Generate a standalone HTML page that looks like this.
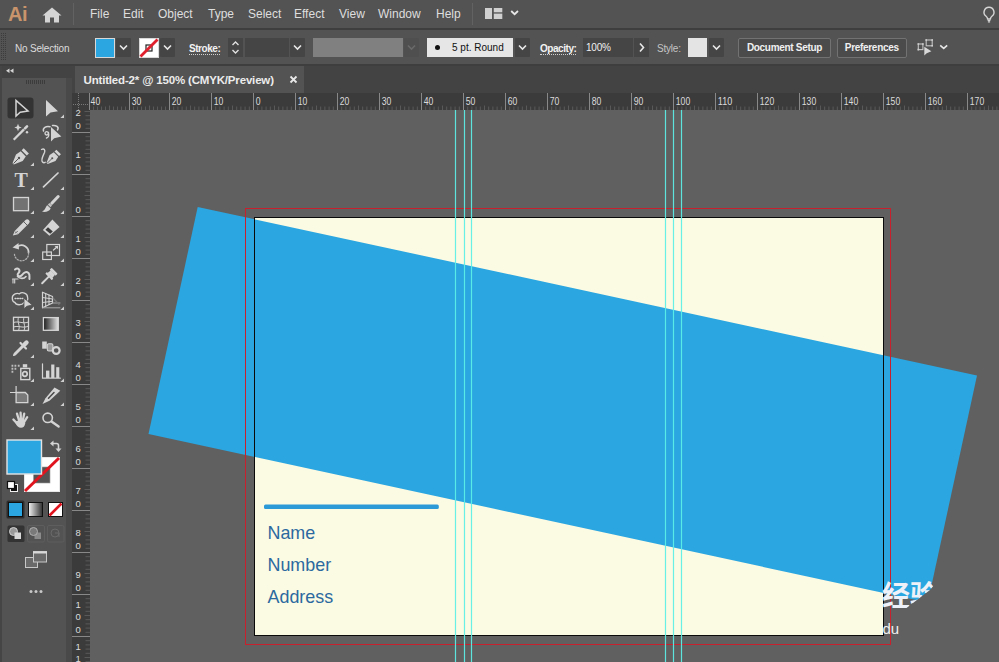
<!DOCTYPE html>
<html><head><meta charset="utf-8"><title>Untitled-2* @ 150% (CMYK/Preview)</title>
<style>
html,body{margin:0;padding:0;}
body{width:999px;height:662px;overflow:hidden;background:#606060;position:relative;font-family:"Liberation Sans",sans-serif;}
.abs{position:absolute;}
.menubar{left:0;top:0;width:999px;height:29px;background:#535353;}
.mi{position:absolute;top:6px;font-size:12px;color:#dedede;line-height:16px;white-space:nowrap;}
.ctrl{left:0;top:30px;width:999px;height:35px;background:#535353;}
.sep1{left:0;top:28px;width:999px;height:2px;background:#3e3e3e;}
.sep2{left:0;top:64px;width:999px;height:2px;background:#3e3e3e;}
.lbl{position:absolute;font-size:10px;color:#e8e8e8;white-space:nowrap;line-height:12px;letter-spacing:-0.2px;}
.dd{position:absolute;top:38px;height:19px;width:15px;background:#454545;border-radius:1px;}
.btn{position:absolute;top:38px;height:18px;border:1px solid #727272;border-radius:2px;background:#4b4b4b;color:#f0f0f0;font-size:10px;font-weight:bold;line-height:18px;text-align:center;letter-spacing:-0.3px;}
.tabbar{left:72px;top:66px;width:927px;height:27px;background:#434343;}
.tab{left:75px;top:66px;width:229px;height:27px;background:#535353;}
.tabtxt{position:absolute;left:83.5px;top:73.6px;font-size:11.5px;font-weight:bold;color:#ececec;white-space:nowrap;line-height:13px;letter-spacing:-0.17px;}
.tools{left:0;top:78px;width:66px;height:584px;background:#535353;}
.toolhdr{left:0;top:66px;width:72px;height:12px;background:#434343;}
.strip{left:66px;top:78px;width:6px;height:584px;background:#494949;}
</style></head><body>

<svg class="abs" style="left:0;top:0" width="999" height="662" viewBox="0 0 999 662">
<defs><clipPath id="cv"><rect x="90" y="110" width="909" height="552"/></clipPath></defs>
<g clip-path="url(#cv)">
<rect x="254.5" y="217.5" width="629" height="418" fill="#fbfae3"/>
<polygon points="197.7,207.0 977.0,375.5 927.8,602.5 148.5,434.0" fill="#2ba6e0"/>
<rect x="264" y="504.6" width="174.8" height="4.4" rx="1.5" fill="#2d9ad8"/>
<text x="267.5" y="538.8" font-family="Liberation Sans, sans-serif" font-size="17.9" fill="#2b699f">Name</text>
<text x="267.5" y="570.7" font-family="Liberation Sans, sans-serif" font-size="17.9" fill="#2b699f">Number</text>
<text x="267.5" y="602.9" font-family="Liberation Sans, sans-serif" font-size="17.9" fill="#2b699f">Address</text>
<rect x="254.5" y="217.5" width="629" height="418" fill="none" stroke="#0a0a0a" stroke-width="1"/>
<rect x="245.5" y="208.5" width="645" height="436" fill="none" stroke="#c8202c" stroke-width="1"/>
<text x="882" y="606" font-family="Liberation Sans, Noto Sans CJK SC, sans-serif" font-size="28" font-weight="bold" fill="#eef2f8">经验</text>
<text x="882.5" y="634" font-family="Liberation Sans, sans-serif" font-size="15" fill="#f0f0f0">du</text>
<polygon points="939,560 999,560 999,662 900,662 900,640 900,613 913,603 930,590 936.5,582" fill="#606060"/>
<line x1="455.5" y1="110" x2="455.5" y2="662" stroke="#5cf0e8" stroke-width="1.2" opacity="0.92"/>
<line x1="464.5" y1="110" x2="464.5" y2="662" stroke="#5cf0e8" stroke-width="1.2" opacity="0.92"/>
<line x1="471.5" y1="110" x2="471.5" y2="662" stroke="#5cf0e8" stroke-width="1.2" opacity="0.92"/>
<line x1="665.5" y1="110" x2="665.5" y2="662" stroke="#5cf0e8" stroke-width="1.2" opacity="0.92"/>
<line x1="673.5" y1="110" x2="673.5" y2="662" stroke="#5cf0e8" stroke-width="1.2" opacity="0.92"/>
<line x1="681.5" y1="110" x2="681.5" y2="662" stroke="#5cf0e8" stroke-width="1.2" opacity="0.92"/>
</g>
<rect x="72" y="93" width="927" height="17" fill="#3b3b3b"/>
<rect x="72" y="92" width="18" height="570" fill="#3b3b3b"/>
<path d="M89.5 93V110M129.5 93V110M169.5 93V110M211.5 93V110M253.5 93V110M295.5 93V110M337.5 93V110M379.5 93V110M421.5 93V110M463.5 93V110M505.5 93V110M547.5 93V110M589.5 93V110M631.5 93V110M673.5 93V110M715.5 93V110M757.5 93V110M799.5 93V110M841.5 93V110M883.5 93V110M925.5 93V110M967.5 93V110" stroke="#888888" stroke-width="1" fill="none"/>
<path d="M93.5 106.5V110M97.5 106.5V110M101.5 106.5V110M105.5 106.5V110M109.5 105.5V110M113.5 106.5V110M117.5 106.5V110M121.5 106.5V110M125.5 106.5V110M133.5 106.5V110M137.5 106.5V110M141.5 106.5V110M145.5 106.5V110M149.5 105.5V110M153.5 106.5V110M157.5 106.5V110M161.5 106.5V110M165.5 106.5V110M173.7 106.5V110M177.9 106.5V110M182.1 106.5V110M186.3 106.5V110M190.5 105.5V110M194.7 106.5V110M198.9 106.5V110M203.1 106.5V110M207.3 106.5V110M215.7 106.5V110M219.9 106.5V110M224.1 106.5V110M228.3 106.5V110M232.5 105.5V110M236.7 106.5V110M240.9 106.5V110M245.1 106.5V110M249.3 106.5V110M257.7 106.5V110M261.9 106.5V110M266.1 106.5V110M270.3 106.5V110M274.5 105.5V110M278.7 106.5V110M282.9 106.5V110M287.1 106.5V110M291.3 106.5V110M299.7 106.5V110M303.9 106.5V110M308.1 106.5V110M312.3 106.5V110M316.5 105.5V110M320.7 106.5V110M324.9 106.5V110M329.1 106.5V110M333.3 106.5V110M341.7 106.5V110M345.9 106.5V110M350.1 106.5V110M354.3 106.5V110M358.5 105.5V110M362.7 106.5V110M366.9 106.5V110M371.1 106.5V110M375.3 106.5V110M383.7 106.5V110M387.9 106.5V110M392.1 106.5V110M396.3 106.5V110M400.5 105.5V110M404.7 106.5V110M408.9 106.5V110M413.1 106.5V110M417.3 106.5V110M425.7 106.5V110M429.9 106.5V110M434.1 106.5V110M438.3 106.5V110M442.5 105.5V110M446.7 106.5V110M450.9 106.5V110M455.1 106.5V110M459.3 106.5V110M467.7 106.5V110M471.9 106.5V110M476.1 106.5V110M480.3 106.5V110M484.5 105.5V110M488.7 106.5V110M492.9 106.5V110M497.1 106.5V110M501.3 106.5V110M509.7 106.5V110M513.9 106.5V110M518.1 106.5V110M522.3 106.5V110M526.5 105.5V110M530.7 106.5V110M534.9 106.5V110M539.1 106.5V110M543.3 106.5V110M551.7 106.5V110M555.9 106.5V110M560.1 106.5V110M564.3 106.5V110M568.5 105.5V110M572.7 106.5V110M576.9 106.5V110M581.1 106.5V110M585.3 106.5V110M593.7 106.5V110M597.9 106.5V110M602.1 106.5V110M606.3 106.5V110M610.5 105.5V110M614.7 106.5V110M618.9 106.5V110M623.1 106.5V110M627.3 106.5V110M635.7 106.5V110M639.9 106.5V110M644.1 106.5V110M648.3 106.5V110M652.5 105.5V110M656.7 106.5V110M660.9 106.5V110M665.1 106.5V110M669.3 106.5V110M677.7 106.5V110M681.9 106.5V110M686.1 106.5V110M690.3 106.5V110M694.5 105.5V110M698.7 106.5V110M702.9 106.5V110M707.1 106.5V110M711.3 106.5V110M719.7 106.5V110M723.9 106.5V110M728.1 106.5V110M732.3 106.5V110M736.5 105.5V110M740.7 106.5V110M744.9 106.5V110M749.1 106.5V110M753.3 106.5V110M761.7 106.5V110M765.9 106.5V110M770.1 106.5V110M774.3 106.5V110M778.5 105.5V110M782.7 106.5V110M786.9 106.5V110M791.1 106.5V110M795.3 106.5V110M803.7 106.5V110M807.9 106.5V110M812.1 106.5V110M816.3 106.5V110M820.5 105.5V110M824.7 106.5V110M828.9 106.5V110M833.1 106.5V110M837.3 106.5V110M845.7 106.5V110M849.9 106.5V110M854.1 106.5V110M858.3 106.5V110M862.5 105.5V110M866.7 106.5V110M870.9 106.5V110M875.1 106.5V110M879.3 106.5V110M887.7 106.5V110M891.9 106.5V110M896.1 106.5V110M900.3 106.5V110M904.5 105.5V110M908.7 106.5V110M912.9 106.5V110M917.1 106.5V110M921.3 106.5V110M929.7 106.5V110M933.9 106.5V110M938.1 106.5V110M942.3 106.5V110M946.5 105.5V110M950.7 106.5V110M954.9 106.5V110M959.1 106.5V110M963.3 106.5V110M971.7 106.5V110M975.9 106.5V110M980.1 106.5V110M984.3 106.5V110M988.5 105.5V110M992.7 106.5V110M996.9 106.5V110" stroke="#8c8c8c" stroke-width="1" fill="none" opacity="0.38"/>
<text x="90.6" y="104.5" font-family="Liberation Sans, sans-serif" font-size="10" fill="#dcdcdc" textLength="9.6" lengthAdjust="spacingAndGlyphs">40</text>
<text x="131.8" y="104.5" font-family="Liberation Sans, sans-serif" font-size="10" fill="#dcdcdc" textLength="9.6" lengthAdjust="spacingAndGlyphs">30</text>
<text x="171.8" y="104.5" font-family="Liberation Sans, sans-serif" font-size="10" fill="#dcdcdc" textLength="9.6" lengthAdjust="spacingAndGlyphs">20</text>
<text x="213.8" y="104.5" font-family="Liberation Sans, sans-serif" font-size="10" fill="#dcdcdc" textLength="9.6" lengthAdjust="spacingAndGlyphs">10</text>
<text x="255.8" y="104.5" font-family="Liberation Sans, sans-serif" font-size="10" fill="#dcdcdc" textLength="4.8" lengthAdjust="spacingAndGlyphs">0</text>
<text x="297.8" y="104.5" font-family="Liberation Sans, sans-serif" font-size="10" fill="#dcdcdc" textLength="9.6" lengthAdjust="spacingAndGlyphs">10</text>
<text x="339.8" y="104.5" font-family="Liberation Sans, sans-serif" font-size="10" fill="#dcdcdc" textLength="9.6" lengthAdjust="spacingAndGlyphs">20</text>
<text x="381.8" y="104.5" font-family="Liberation Sans, sans-serif" font-size="10" fill="#dcdcdc" textLength="9.6" lengthAdjust="spacingAndGlyphs">30</text>
<text x="423.8" y="104.5" font-family="Liberation Sans, sans-serif" font-size="10" fill="#dcdcdc" textLength="9.6" lengthAdjust="spacingAndGlyphs">40</text>
<text x="465.8" y="104.5" font-family="Liberation Sans, sans-serif" font-size="10" fill="#dcdcdc" textLength="9.6" lengthAdjust="spacingAndGlyphs">50</text>
<text x="507.8" y="104.5" font-family="Liberation Sans, sans-serif" font-size="10" fill="#dcdcdc" textLength="9.6" lengthAdjust="spacingAndGlyphs">60</text>
<text x="549.8" y="104.5" font-family="Liberation Sans, sans-serif" font-size="10" fill="#dcdcdc" textLength="9.6" lengthAdjust="spacingAndGlyphs">70</text>
<text x="591.8" y="104.5" font-family="Liberation Sans, sans-serif" font-size="10" fill="#dcdcdc" textLength="9.6" lengthAdjust="spacingAndGlyphs">80</text>
<text x="633.8" y="104.5" font-family="Liberation Sans, sans-serif" font-size="10" fill="#dcdcdc" textLength="9.6" lengthAdjust="spacingAndGlyphs">90</text>
<text x="675.8" y="104.5" font-family="Liberation Sans, sans-serif" font-size="10" fill="#dcdcdc" textLength="14.4" lengthAdjust="spacingAndGlyphs">100</text>
<text x="717.8" y="104.5" font-family="Liberation Sans, sans-serif" font-size="10" fill="#dcdcdc" textLength="14.4" lengthAdjust="spacingAndGlyphs">110</text>
<text x="759.8" y="104.5" font-family="Liberation Sans, sans-serif" font-size="10" fill="#dcdcdc" textLength="14.4" lengthAdjust="spacingAndGlyphs">120</text>
<text x="801.8" y="104.5" font-family="Liberation Sans, sans-serif" font-size="10" fill="#dcdcdc" textLength="14.4" lengthAdjust="spacingAndGlyphs">130</text>
<text x="843.8" y="104.5" font-family="Liberation Sans, sans-serif" font-size="10" fill="#dcdcdc" textLength="14.4" lengthAdjust="spacingAndGlyphs">140</text>
<text x="885.8" y="104.5" font-family="Liberation Sans, sans-serif" font-size="10" fill="#dcdcdc" textLength="14.4" lengthAdjust="spacingAndGlyphs">150</text>
<text x="927.8" y="104.5" font-family="Liberation Sans, sans-serif" font-size="10" fill="#dcdcdc" textLength="14.4" lengthAdjust="spacingAndGlyphs">160</text>
<text x="969.8" y="104.5" font-family="Liberation Sans, sans-serif" font-size="10" fill="#dcdcdc" textLength="14.4" lengthAdjust="spacingAndGlyphs">170</text>
<g clip-path="url(#lr)"><defs><clipPath id="lr"><rect x="72" y="110" width="18" height="552"/></clipPath></defs>
<path d="M72 132.5H90M72 174.5H90M72 216.5H90M72 258.5H90M72 300.5H90M72 342.5H90M72 384.5H90M72 426.5H90M72 468.5H90M72 510.5H90M72 552.5H90M72 594.5H90M72 636.5H90" stroke="#888888" stroke-width="1" fill="none"/>
<path d="M84.5 111.5H90M85.5 115.7H90M85.5 119.9H90M85.5 124.1H90M85.5 128.3H90M85.5 136.7H90M85.5 140.9H90M85.5 145.1H90M85.5 149.3H90M84.5 153.5H90M85.5 157.7H90M85.5 161.9H90M85.5 166.1H90M85.5 170.3H90M85.5 178.7H90M85.5 182.9H90M85.5 187.1H90M85.5 191.3H90M84.5 195.5H90M85.5 199.7H90M85.5 203.9H90M85.5 208.1H90M85.5 212.3H90M85.5 220.7H90M85.5 224.9H90M85.5 229.1H90M85.5 233.3H90M84.5 237.5H90M85.5 241.7H90M85.5 245.9H90M85.5 250.1H90M85.5 254.3H90M85.5 262.7H90M85.5 266.9H90M85.5 271.1H90M85.5 275.3H90M84.5 279.5H90M85.5 283.7H90M85.5 287.9H90M85.5 292.1H90M85.5 296.3H90M85.5 304.7H90M85.5 308.9H90M85.5 313.1H90M85.5 317.3H90M84.5 321.5H90M85.5 325.7H90M85.5 329.9H90M85.5 334.1H90M85.5 338.3H90M85.5 346.7H90M85.5 350.9H90M85.5 355.1H90M85.5 359.3H90M84.5 363.5H90M85.5 367.7H90M85.5 371.9H90M85.5 376.1H90M85.5 380.3H90M85.5 388.7H90M85.5 392.9H90M85.5 397.1H90M85.5 401.3H90M84.5 405.5H90M85.5 409.7H90M85.5 413.9H90M85.5 418.1H90M85.5 422.3H90M85.5 430.7H90M85.5 434.9H90M85.5 439.1H90M85.5 443.3H90M84.5 447.5H90M85.5 451.7H90M85.5 455.9H90M85.5 460.1H90M85.5 464.3H90M85.5 472.7H90M85.5 476.9H90M85.5 481.1H90M85.5 485.3H90M84.5 489.5H90M85.5 493.7H90M85.5 497.9H90M85.5 502.1H90M85.5 506.3H90M85.5 514.7H90M85.5 518.9H90M85.5 523.1H90M85.5 527.3H90M84.5 531.5H90M85.5 535.7H90M85.5 539.9H90M85.5 544.1H90M85.5 548.3H90M85.5 556.7H90M85.5 560.9H90M85.5 565.1H90M85.5 569.3H90M84.5 573.5H90M85.5 577.7H90M85.5 581.9H90M85.5 586.1H90M85.5 590.3H90M85.5 598.7H90M85.5 602.9H90M85.5 607.1H90M85.5 611.3H90M84.5 615.5H90M85.5 619.7H90M85.5 623.9H90M85.5 628.1H90M85.5 632.3H90M85.5 640.7H90M85.5 644.9H90M85.5 649.1H90M85.5 653.3H90M84.5 657.5H90M85.5 661.7H90" stroke="#8c8c8c" stroke-width="1" fill="none" opacity="0.38"/>
<text x="75.5" y="116.4" font-family="Liberation Sans, sans-serif" font-size="9.5" fill="#dcdcdc">2</text>
<text x="75.5" y="129.0" font-family="Liberation Sans, sans-serif" font-size="9.5" fill="#dcdcdc">0</text>
<text x="75.5" y="158.4" font-family="Liberation Sans, sans-serif" font-size="9.5" fill="#dcdcdc">1</text>
<text x="75.5" y="171.0" font-family="Liberation Sans, sans-serif" font-size="9.5" fill="#dcdcdc">0</text>
<text x="75.5" y="213.0" font-family="Liberation Sans, sans-serif" font-size="9.5" fill="#dcdcdc">0</text>
<text x="75.5" y="242.4" font-family="Liberation Sans, sans-serif" font-size="9.5" fill="#dcdcdc">1</text>
<text x="75.5" y="255.0" font-family="Liberation Sans, sans-serif" font-size="9.5" fill="#dcdcdc">0</text>
<text x="75.5" y="284.4" font-family="Liberation Sans, sans-serif" font-size="9.5" fill="#dcdcdc">2</text>
<text x="75.5" y="297.0" font-family="Liberation Sans, sans-serif" font-size="9.5" fill="#dcdcdc">0</text>
<text x="75.5" y="326.4" font-family="Liberation Sans, sans-serif" font-size="9.5" fill="#dcdcdc">3</text>
<text x="75.5" y="339.0" font-family="Liberation Sans, sans-serif" font-size="9.5" fill="#dcdcdc">0</text>
<text x="75.5" y="368.4" font-family="Liberation Sans, sans-serif" font-size="9.5" fill="#dcdcdc">4</text>
<text x="75.5" y="381.0" font-family="Liberation Sans, sans-serif" font-size="9.5" fill="#dcdcdc">0</text>
<text x="75.5" y="410.4" font-family="Liberation Sans, sans-serif" font-size="9.5" fill="#dcdcdc">5</text>
<text x="75.5" y="423.0" font-family="Liberation Sans, sans-serif" font-size="9.5" fill="#dcdcdc">0</text>
<text x="75.5" y="452.4" font-family="Liberation Sans, sans-serif" font-size="9.5" fill="#dcdcdc">6</text>
<text x="75.5" y="465.0" font-family="Liberation Sans, sans-serif" font-size="9.5" fill="#dcdcdc">0</text>
<text x="75.5" y="494.4" font-family="Liberation Sans, sans-serif" font-size="9.5" fill="#dcdcdc">7</text>
<text x="75.5" y="507.0" font-family="Liberation Sans, sans-serif" font-size="9.5" fill="#dcdcdc">0</text>
<text x="75.5" y="536.4" font-family="Liberation Sans, sans-serif" font-size="9.5" fill="#dcdcdc">8</text>
<text x="75.5" y="549.0" font-family="Liberation Sans, sans-serif" font-size="9.5" fill="#dcdcdc">0</text>
<text x="75.5" y="578.4" font-family="Liberation Sans, sans-serif" font-size="9.5" fill="#dcdcdc">9</text>
<text x="75.5" y="591.0" font-family="Liberation Sans, sans-serif" font-size="9.5" fill="#dcdcdc">0</text>
<text x="75.5" y="607.8" font-family="Liberation Sans, sans-serif" font-size="9.5" fill="#dcdcdc">1</text>
<text x="75.5" y="620.4" font-family="Liberation Sans, sans-serif" font-size="9.5" fill="#dcdcdc">0</text>
<text x="75.5" y="633.0" font-family="Liberation Sans, sans-serif" font-size="9.5" fill="#dcdcdc">0</text>
<text x="75.5" y="649.8" font-family="Liberation Sans, sans-serif" font-size="9.5" fill="#dcdcdc">1</text>
<text x="75.5" y="662.4" font-family="Liberation Sans, sans-serif" font-size="9.5" fill="#dcdcdc">1</text>
<text x="75.5" y="675.0" font-family="Liberation Sans, sans-serif" font-size="9.5" fill="#dcdcdc">0</text>
<text x="75.5" y="691.8" font-family="Liberation Sans, sans-serif" font-size="9.5" fill="#dcdcdc">1</text>
<text x="75.5" y="704.4" font-family="Liberation Sans, sans-serif" font-size="9.5" fill="#dcdcdc">2</text>
<text x="75.5" y="717.0" font-family="Liberation Sans, sans-serif" font-size="9.5" fill="#dcdcdc">0</text>
</g>
<rect x="72" y="92" width="17" height="18" fill="#3b3b3b"/>
<path d="M78.5 93V110M73 104.5H90" stroke="#8a8a8a" stroke-width="1" stroke-dasharray="1 1" fill="none" opacity="0.8"/>
</svg>
<div class="abs menubar"></div><div class="abs sep1"></div><div class="abs ctrl"></div><div class="abs sep2"></div>
<div class="abs" style="left:8px;top:1px;font-size:20px;font-weight:bold;color:#c9946b;letter-spacing:-0.5px;line-height:26px;">Ai</div>
<svg class="abs" style="left:42px;top:7px" width="20" height="16" viewBox="0 0 20 16"><path d="M10 0.5L0.5 8.5H3V15.5H8V10.5H12V15.5H17V8.5H19.5Z" fill="#d4d4d4"/></svg>
<div class="abs" style="left:73px;top:3px;width:1px;height:22px;background:#626262"></div>
<div class="mi" id="m_File" style="left:90px;width:18px">File</div>
<div class="mi" id="m_Edit" style="left:123px;width:20px">Edit</div>
<div class="mi" id="m_Object" style="left:158px;width:35px">Object</div>
<div class="mi" id="m_Type" style="left:208px;width:25px">Type</div>
<div class="mi" id="m_Select" style="left:248px;width:31px">Select</div>
<div class="mi" id="m_Effect" style="left:294px;width:30px">Effect</div>
<div class="mi" id="m_View" style="left:339px;width:24px">View</div>
<div class="mi" id="m_Window" style="left:378px;width:43px">Window</div>
<div class="mi" id="m_Help" style="left:436px;width:25px">Help</div>
<div class="abs" style="left:472px;top:3px;width:1px;height:22px;background:#626262"></div>
<svg class="abs" style="left:485px;top:8px" width="36" height="12" viewBox="0 0 36 12"><rect x="0" y="0" width="7" height="11" fill="#d0d0d0"/><rect x="8.800" y="0" width="8.500" height="4.300" fill="#d0d0d0"/><rect x="8.800" y="5.600" width="8.500" height="5.400" fill="#d0d0d0"/><path d="M26.200 3L29.600 6.200L33 3" stroke="#e8e8e8" stroke-width="1.800" fill="none"/></svg>
<svg class="abs" style="left:980px;top:5px" width="19" height="20" viewBox="0 0 19 20"><path d="M9 2.300a4.900 4.900 0 0 0-2.900 8.900c.9.700 1.400 1.600 1.500 2.800h2.800c.1-1.200.6-2.100 1.500-2.800A4.900 4.900 0 0 0 9 2.300Z" fill="none" stroke="#d6d6d6" stroke-width="1.400"/><path d="M7.600 15.300h2.800M7.900 16.900h2.200" stroke="#d6d6d6" stroke-width="1.300"/></svg>
<div class="abs" style="left:1px;top:33px;width:6px;height:28px;background:repeating-linear-gradient(0deg,#535353 0 1px,rgba(83,83,83,0) 1px 2px),repeating-linear-gradient(90deg,#3c3c3c 0 1px,#535353 1px 2px)"></div>
<div class="lbl" style="left:15px;top:43px;color:#dcdcdc">No Selection</div>
<div class="abs" style="left:95px;top:38px;width:18px;height:18px;background:#2ba6e0;border:1px solid #d8d8d8"></div>
<div class="dd" style="left:116px;background:#454545"><svg width="15" height="19" viewBox="0 0 15 19"><path d="M4 7.500L7.500 11L11 7.500" stroke="#e8e8e8" stroke-width="1.600" fill="none"/></svg></div>
<svg class="abs" style="left:139px;top:38px" width="20" height="20" viewBox="0 0 20 20"><rect x="0.5" y="0.5" width="19" height="19" fill="#ffffff" stroke="#d8d8d8"/><rect x="7" y="7" width="6" height="6" fill="none" stroke="#222" stroke-width="1.200"/><path d="M1.500 18.500L18.500 1.500" stroke="#e0202c" stroke-width="2.800"/></svg>
<div class="dd" style="left:160px;background:#454545"><svg width="15" height="19" viewBox="0 0 15 19"><path d="M4 7.500L7.500 11L11 7.500" stroke="#e8e8e8" stroke-width="1.600" fill="none"/></svg></div>
<div class="lbl" style="left:189px;top:43px;font-weight:bold;color:#f2f2f2;border-bottom:1px dotted #d0d0d0;line-height:11px;letter-spacing:-0.45px;">Stroke:</div>
<div class="abs" style="left:228px;top:38px;width:15px;height:19px;background:#454545"><svg width="15" height="19" viewBox="0 0 15 19"><path d="M4.500 7L7.500 4L10.500 7M4.500 12L7.500 15L10.500 12" stroke="#e0e0e0" stroke-width="1.400" fill="none"/></svg></div>
<div class="abs" style="left:245px;top:38px;width:44px;height:19px;background:#454545"></div>
<div class="dd" style="left:290px;background:#454545"><svg width="15" height="19" viewBox="0 0 15 19"><path d="M4 7.500L7.500 11L11 7.500" stroke="#e8e8e8" stroke-width="1.600" fill="none"/></svg></div>
<div class="abs" style="left:313px;top:38px;width:90px;height:19px;background:#808080"></div>
<div class="dd" style="left:404px;background:#4f4f4f"><svg width="15" height="19" viewBox="0 0 15 19"><path d="M4 7.500L7.500 11L11 7.500" stroke="#6a6a6a" stroke-width="1.600" fill="none"/></svg></div>
<div class="abs" style="left:427px;top:38px;width:86px;height:19px;background:#e6e6e6"><div class="abs" style="left:8px;top:7px;width:5px;height:5px;border-radius:3px;background:#111"></div><div class="lbl" style="left:25px;top:4px;color:#111;letter-spacing:0">5 pt. Round</div></div>
<div class="dd" style="left:515px;background:#454545"><svg width="15" height="19" viewBox="0 0 15 19"><path d="M4 7.500L7.500 11L11 7.500" stroke="#e8e8e8" stroke-width="1.600" fill="none"/></svg></div>
<div class="lbl" style="left:540px;top:43px;font-weight:bold;color:#f2f2f2;border-bottom:1px dotted #d0d0d0;line-height:11px;letter-spacing:-0.45px;">Opacity:</div>
<div class="abs" style="left:583px;top:38px;width:50px;height:19px;background:#454545"><div class="lbl" style="left:3px;top:4px;color:#f0f0f0">100%</div></div>
<div class="abs" style="left:634px;top:38px;width:15px;height:19px;background:#454545"><svg width="15" height="19" viewBox="0 0 15 19"><path d="M6 5.500L9.500 9.500L6 13.500" stroke="#e8e8e8" stroke-width="1.600" fill="none"/></svg></div>
<div class="lbl" style="left:657px;top:43px;color:#c4c4c4;">Style:</div>
<div class="abs" style="left:688px;top:38px;width:19px;height:19px;background:#e4e4e4"></div>
<div class="dd" style="left:709px;background:#454545"><svg width="15" height="19" viewBox="0 0 15 19"><path d="M4 7.500L7.500 11L11 7.500" stroke="#e8e8e8" stroke-width="1.600" fill="none"/></svg></div>
<div class="btn" style="left:738px;width:91px">Document Setup</div>
<div class="btn" style="left:836.5px;width:68.5px">Preferences</div>
<svg class="abs" style="left:917px;top:38px" width="34" height="19" viewBox="0 0 34 19"><rect x="1.300" y="6" width="4.600" height="5.600" fill="none" stroke="#c4c4c4" stroke-width="1.100"/><rect x="9.200" y="2" width="6" height="5.800" fill="none" stroke="#c4c4c4" stroke-width="1.100"/><path d="M0.500 5.200h1.600v1.600h-1.600zM5.100 5.200h1.600v1.600h-1.600zM0.500 10.800h1.600v1.600h-1.600zM8.400 1.200h1.600v1.600h-1.600zM14.400 1.200h1.600v1.600h-1.600zM14.400 7h1.600v1.600h-1.600z" fill="#d0d0d0"/><path d="M7.300 8.800V17.400L9.700 15.200L14.400 13.200Z" fill="#d8d8d8"/><path d="M23.200 7.300L26.700 10.400L30.200 7.300" stroke="#e8e8e8" stroke-width="1.600" fill="none"/></svg>
<div class="abs tabbar"></div><div class="abs tab"></div><div class="tabtxt">Untitled-2* @ 150% (CMYK/Preview)</div>
<svg class="abs" style="left:289px;top:75px" width="9" height="9" viewBox="0 0 9 9"><path d="M1.500 1.500L7.500 7.500M7.500 1.500L1.500 7.500" stroke="#e8e8e8" stroke-width="1.800"/></svg>
<div class="abs toolhdr"></div><div class="abs tools"></div><div class="abs strip"></div><div class="abs" style="left:0;top:66px;width:2px;height:596px;background:#454545"></div>
<svg class="abs" style="left:5px;top:67px" width="10" height="8" viewBox="0 0 10 8"><path d="M4.500 1.600V6L1 3.800ZM8.500 1.600V6L5 3.800Z" fill="#d4d4d4"/></svg>
<div class="abs" style="left:26px;top:80px;width:20px;height:4px;background:repeating-linear-gradient(90deg,#3c3c3c 0 1px,#535353 1px 2px)"></div>
<svg class="abs" style="left:0;top:92px" width="72" height="570" viewBox="0 92 72 570">
<defs><linearGradient id="gr" x1="0" x2="1" y1="0" y2="0"><stop offset="0" stop-color="#f4f4f4"/><stop offset="1" stop-color="#303030"/></linearGradient><linearGradient id="gr2" x1="0" x2="1" y1="0" y2="0"><stop offset="0" stop-color="#1c1c1c"/><stop offset="1" stop-color="#e4e4e4"/></linearGradient></defs>
<rect x="7.5" y="97.5" width="26" height="21" rx="3" fill="#333333"/>
<g transform="translate(21 108)" fill="none" stroke="#d4d4d4" stroke-width="1.3" stroke-linejoin="round" stroke-linecap="round"><path d="M-5 -7.5V8L-0.800 4.200L7 3Z" stroke-width="1.500" stroke-linejoin="miter"/></g>
<g transform="translate(51 108)" fill="none" stroke="#d4d4d4" stroke-width="1.3" stroke-linejoin="round" stroke-linecap="round"><path d="M-5 -8V8.5L-0.5 4.500L7 3.200Z" fill="#d4d4d4" stroke="none"/></g>
<path d="M64 118v-3.6l-3.6 3.600z" fill="#cfcfcf"/>
<g transform="translate(21 132)" fill="none" stroke="#d4d4d4" stroke-width="1.3" stroke-linejoin="round" stroke-linecap="round"><path d="M-7.300 7.700L3 -2.600" stroke-width="2.300" stroke-linecap="butt"/><path d="M4 -3.600L6 -5.600" stroke-width="2.600"/><path d="M-3 -8.200L-1.900 -5.600L0.700 -4.500L-1.900 -3.400L-3 -0.800L-4.100 -3.400L-6.700 -4.500L-4.100 -5.600Z" fill="#d4d4d4" stroke="none"/><circle cx="6" cy="0.200" r="1.200" fill="#d4d4d4" stroke="none"/></g>
<g transform="translate(51 132)" fill="none" stroke="#d4d4d4" stroke-width="1.3" stroke-linejoin="round" stroke-linecap="round"><path d="M-1 -5.200C-5 -6.200 -8.500 -4 -7.500 -1" stroke-width="1.500"/><path d="M1.500 -6.500C5 -7 8.500 -5 6.500 -2" stroke-width="1.500"/><circle cx="-4.300" cy="1.300" r="1.700" stroke-width="1.300"/><path d="M-2.600 0.500C-2 3 -2.500 5.500 -4.500 6" stroke-width="1.400"/><path d="M0 -5V9.500L3.200 6.200L10.400 4.600Z" fill="#d4d4d4" stroke="none"/></g>
<g transform="translate(21 156)" fill="none" stroke="#d4d4d4" stroke-width="1.3" stroke-linejoin="round" stroke-linecap="round"><path d="M-8.500 7.200L-5 -1.600L-0.300 -4.700L4.800 0.400L1.700 5L-7.200 8.600Z" fill="#d4d4d4" stroke="none"/><path d="M0.600 -5.700L2.700 -7.800L7.900 -2.600L5.800 -0.500Z" fill="#d4d4d4" stroke="none"/><path d="M-7.500 7.500L-2.500 2.500" stroke="#535353" stroke-width="1" stroke-linecap="butt"/><circle cx="-2" cy="2" r="1.200" fill="#535353" stroke="none"/></g>
<path d="M34 166v-3.6l-3.6 3.600z" fill="#cfcfcf"/>
<g transform="translate(51 156)" fill="none" stroke="#d4d4d4" stroke-width="1.3" stroke-linejoin="round" stroke-linecap="round"><g transform="translate(3 0.500) scale(0.880)"><path d="M-8.500 7.200L-5 -1.600L-0.300 -4.700L4.800 0.400L1.700 5L-7.200 8.600Z" fill="#d4d4d4" stroke="none"/><path d="M0.600 -5.700L2.700 -7.800L7.900 -2.600L5.800 -0.500Z" fill="#d4d4d4" stroke="none"/><path d="M-7.500 7.500L-2.500 2.500" stroke="#535353" stroke-width="1" stroke-linecap="butt"/><circle cx="-2" cy="2" r="1.200" fill="#535353" stroke="none"/></g><path d="M-9.500 -6.500C-7 -8 -5.500 -6 -6.500 -3.500C-8 0 -10.500 4 -8.500 6C-7.500 7 -6.500 6.800 -5.800 6.200" stroke-width="1.400"/></g>
<text x="21.200" y="186.700" text-anchor="middle" font-family="Liberation Serif, serif" font-weight="bold" font-size="20" fill="#d4d4d4">T</text>
<path d="M34 190v-3.600l-3.600 3.600z" fill="#cfcfcf"/>
<g transform="translate(51 180)" fill="none" stroke="#d4d4d4" stroke-width="1.3" stroke-linejoin="round" stroke-linecap="round"><path d="M-7.500 6.800L7 -7" stroke-width="1.700"/></g>
<path d="M64 190v-3.6l-3.6 3.600z" fill="#cfcfcf"/>
<g transform="translate(21 204)" fill="none" stroke="#d4d4d4" stroke-width="1.3" stroke-linejoin="round" stroke-linecap="round"><rect x="-7.500" y="-6.500" width="15" height="13.200" fill="#727272" stroke-width="1.300" stroke-linejoin="miter"/></g>
<path d="M34 214v-3.6l-3.6 3.600z" fill="#cfcfcf"/>
<g transform="translate(51 204)" fill="none" stroke="#d4d4d4" stroke-width="1.3" stroke-linejoin="round" stroke-linecap="round"><path d="M7.200 -7.500L0.800 -0.800" stroke-width="3" /><path d="M-0.300 0.300L-1.800 1.900" stroke-width="3.600" stroke="#c4c4c4" stroke-linecap="butt"/><path d="M-3.700 1.300C-5.500 2.500 -5 5.500 -9 7.800C-5 8.300 -1.500 7.500 -0.300 4.600Z" fill="#d4d4d4" stroke="none"/></g>
<path d="M64 214v-3.6l-3.6 3.600z" fill="#cfcfcf"/>
<g transform="translate(21 228)" fill="none" stroke="#d4d4d4" stroke-width="1.3" stroke-linejoin="round" stroke-linecap="round"><path d="M4.200 -4.200L-4.600 4.600" stroke-width="4.800" stroke-linecap="butt"/><path d="M-6.300 2.900L-2.900 6.300L-8.200 7.600Z" fill="#d4d4d4" stroke="none"/><path d="M6.200 -6.200L5.200 -5.200" stroke-width="4.800" stroke-linecap="round"/><path d="M2.800 -6.200L6.200 -2.800" stroke="#535353" stroke-width="0.900"/><path d="M-5.800 5L-3.500 3.500" stroke="#535353" stroke-width="0.800"/></g>
<path d="M34 238v-3.6l-3.6 3.600z" fill="#cfcfcf"/>
<g transform="translate(51 228)" fill="none" stroke="#d4d4d4" stroke-width="1.3" stroke-linejoin="round" stroke-linecap="round"><path d="M1.400 -8.600L8.600 -1L-1.600 7.700L-8.100 2Z" fill="#d4d4d4" stroke="none"/><path d="M-5.600 1.800L-0.800 5.800L1.800 3.400L-3 -0.800Z" fill="#3c3c3c" stroke="none"/></g>
<path d="M64 238v-3.6l-3.6 3.600z" fill="#cfcfcf"/>
<g transform="translate(21 252)" fill="none" stroke="#d4d4d4" stroke-width="1.3" stroke-linejoin="round" stroke-linecap="round"><path d="M-3.500 -5.500A7 7 0 0 1 7.500 1" stroke-width="1.700" stroke-linecap="butt"/><path d="M7.500 1A7 7 0 0 1 -6.500 2.500" stroke-width="1.300" stroke-dasharray="1.200 1.800" stroke="#b0b0b0"/><path d="M-8.500 -4.500L-2.500 -9L-2 -2.500Z" fill="#d4d4d4" stroke="none"/></g>
<path d="M34 262v-3.6l-3.6 3.600z" fill="#cfcfcf"/>
<g transform="translate(51 252)" fill="none" stroke="#d4d4d4" stroke-width="1.3" stroke-linejoin="round" stroke-linecap="round"><rect x="-4.200" y="-7.500" width="12.700" height="11" stroke-linejoin="miter" stroke-width="1.200"/><rect x="-8.300" y="0" width="8.700" height="7.500" stroke-linejoin="miter" stroke-width="1.200"/><path d="M2.500 -2L6.500 -5.500" stroke-width="1.300"/><path d="M3.500 -6H7V-2.800Z" fill="#d4d4d4" stroke="none"/></g>
<path d="M64 262v-3.6l-3.6 3.600z" fill="#cfcfcf"/>
<g transform="translate(21 276)" fill="none" stroke="#d4d4d4" stroke-width="1.3" stroke-linejoin="round" stroke-linecap="round"><path d="M-6 -6.500C-3 -9 0 -6 -2.500 -3C-5 -0.500 -1.500 1.500 1 -1C3 -3.500 5 -5 7.500 -3C9.500 -1 8 1 8.500 3" stroke-width="2"/><path d="M-3.500 0.500C-1 3 3 3 5 0.500" stroke-width="1.600"/><path d="M-8 3.500V7M-6.300 3.500V7" stroke-width="1.100"/><path d="M-8.500 3H-3" stroke-width="1.200"/></g>
<path d="M34 286v-3.6l-3.6 3.600z" fill="#cfcfcf"/>
<g transform="translate(51 276)" fill="none" stroke="#d4d4d4" stroke-width="1.3" stroke-linejoin="round" stroke-linecap="round"><g transform="translate(-2 0.400) rotate(45) scale(0.840)"><rect x="-5" y="-9.500" width="10" height="3.400" rx="0.800" fill="#d4d4d4" stroke="none"/><path d="M-3.600 -6.500H3.600L4.200 -1.500H-4.200Z" fill="#d4d4d4" stroke="none"/><rect x="-5.500" y="-1.800" width="11" height="2.600" rx="0.800" fill="#d4d4d4" stroke="none"/><path d="M0 0.800V11.500" stroke-width="2.400"/></g></g>
<path d="M64 286v-3.6l-3.6 3.600z" fill="#cfcfcf"/>
<g transform="translate(21 300)" fill="none" stroke="#d4d4d4" stroke-width="1.3" stroke-linejoin="round" stroke-linecap="round"><path d="M-8.700 -1.800C-9 -5.500 -4.500 -7.500 -1.500 -6.200C1 -8.500 6.500 -7 6.500 -3C7.500 0 6 2.500 3 2.500C1 5.500 -5 5.500 -6 2.500C-8 2 -8.700 0 -8.700 -1.800Z" stroke-width="1.300"/><path d="M-6 -1.500H2" stroke-dasharray="1 1.400" stroke-width="1.300"/><path d="M3 -1.600V8.800L5.800 6.300L11 5Z" fill="#d4d4d4" stroke="#535353" stroke-width="0.800"/></g>
<path d="M34 310v-3.6l-3.6 3.600z" fill="#cfcfcf"/>
<g transform="translate(51 300)" fill="none" stroke="#d4d4d4" stroke-width="1.3" stroke-linejoin="round" stroke-linecap="round"><path d="M-8.500 -7.800V7.800L1.500 3V-3.500Z" stroke-width="1.200"/><path d="M-5.300 -6.500V6.200M-2 -5V4.600M-8.500 -2.500L1.500 -1M-8.500 2.500L1.500 1.300" stroke-width="1"/><path d="M1.500 3H9M-8 7.800H9" stroke-width="1" stroke="#a8a8a8"/><path d="M2 -2L8 4.500" stroke="#777" stroke-width="1.200"/></g>
<path d="M64 310v-3.6l-3.6 3.600z" fill="#cfcfcf"/>
<g transform="translate(21 324)" fill="none" stroke="#d4d4d4" stroke-width="1.3" stroke-linejoin="round" stroke-linecap="round"><rect x="-7.500" y="-6.700" width="15" height="13.200" stroke-width="1.300" stroke-linejoin="miter"/><path d="M-7.500 -1.500C-3 -3.500 3 0.500 7.500 -2M-7.500 3C-3 1 3 5 7.500 2M-2.500 -6.700C-4.500 -2 0 2 -2.500 6.500M3 -6.700C1 -2 5.500 2 3 6.500" stroke-width="1"/></g>
<g transform="translate(51 324)" fill="none" stroke="#d4d4d4" stroke-width="1.3" stroke-linejoin="round" stroke-linecap="round"><rect x="-7.600" y="-6.400" width="14.900" height="12.700" fill="url(#gr2)" stroke-width="1.300" stroke-linejoin="miter"/></g>
<g transform="translate(21 348)" fill="none" stroke="#d4d4d4" stroke-width="1.3" stroke-linejoin="round" stroke-linecap="round"><path d="M2 -3L-6.500 5.500L-7.300 7.300L-5.500 6.500L3 -2" stroke-width="1.500"/><path d="M-0.500 -5L5 0.500" stroke-width="2.200"/><path d="M3.500 -3.500L5.500 -5.500" stroke-width="4.400"/></g>
<path d="M34 358v-3.6l-3.6 3.600z" fill="#cfcfcf"/>
<g transform="translate(51 348)" fill="none" stroke="#d4d4d4" stroke-width="1.3" stroke-linejoin="round" stroke-linecap="round"><rect x="-8.800" y="-6.500" width="4.600" height="7.200" fill="#d4d4d4" stroke="none"/><rect x="-3.700" y="-4.200" width="5.600" height="7.200" rx="1.500" fill="#9a9a9a" stroke-width="1.100"/><circle cx="5.200" cy="2.500" r="3.400" stroke-width="2.200"/></g>
<g transform="translate(21 372)" fill="none" stroke="#d4d4d4" stroke-width="1.3" stroke-linejoin="round" stroke-linecap="round"><rect x="-0.200" y="-3.600" width="9" height="11.200" stroke-width="1.400" stroke-linejoin="miter"/><rect x="1.800" y="-7.800" width="4.400" height="3.200" fill="#d4d4d4" stroke="none"/><circle cx="3.900" cy="2" r="2.300" stroke-width="1.700"/><path d="M-9.500 -6.300h1.800M-6.500 -6.300h1.800M-3.200 -6.300h1.800M-9.500 -3.300h1.800M-6.500 -3.300h1.800M-9.500 -0.300h1.800" stroke-width="2" stroke-linecap="butt" stroke="#bcbcbc"/></g>
<path d="M34 382v-3.6l-3.6 3.600z" fill="#cfcfcf"/>
<g transform="translate(51 372)" fill="none" stroke="#d4d4d4" stroke-width="1.3" stroke-linejoin="round" stroke-linecap="round"><path d="M-8.500 -8.200V6.200H9.300" stroke-width="1.200" stroke-linejoin="miter"/><rect x="-5" y="-1.400" width="3.400" height="7.400" fill="#d4d4d4" stroke="none"/><rect x="0.200" y="-7.500" width="3.200" height="13.500" fill="#d4d4d4" stroke="none"/><rect x="5.200" y="-4.800" width="3.100" height="10.800" fill="#d4d4d4" stroke="none"/></g>
<path d="M64 382v-3.6l-3.6 3.600z" fill="#cfcfcf"/>
<g transform="translate(21 396)" fill="none" stroke="#d4d4d4" stroke-width="1.3" stroke-linejoin="round" stroke-linecap="round"><path d="M-4.900 -9.900V-3.500M-11 -3.500H-4.900" stroke-width="1.200" stroke-linecap="butt"/><path d="M-4.900 -3.500H4.300L6.800 -1V6.700H-4.900Z" fill="#7a7a7a" stroke-width="1.300" stroke-linejoin="miter"/></g>
<path d="M34 406v-3.6l-3.6 3.600z" fill="#cfcfcf"/>
<g transform="translate(51 396)" fill="none" stroke="#d4d4d4" stroke-width="1.3" stroke-linejoin="round" stroke-linecap="round"><path d="M3.500 -8.500L9.300 -5.300L-1.500 4.800L-8.500 8L-5.500 2.300Z" fill="#d4d4d4" stroke="none"/><path d="M-2.500 2.300L3 -3.500" stroke="#4a4a4a" stroke-width="1.500"/></g>
<path d="M64 406v-3.6l-3.6 3.600z" fill="#cfcfcf"/>
<g transform="translate(21 420)" fill="none" stroke="#d4d4d4" stroke-width="1.3" stroke-linejoin="round" stroke-linecap="round"><path d="M-1.500 2L-4 -6.300M0 2L-0.400 -7.300M1.500 2L3.200 -6.300M2.600 3L6.200 -2.800M-3 4.500L-7.600 -0.500" stroke-width="2.300"/><path d="M-4.800 1L3.800 0L4.200 3.500C3.800 6.300 2.200 7.700 0 7.700C-2.600 7.700 -4.200 6.200 -5.300 3.500Z" fill="#d4d4d4" stroke="none" stroke-width="0.800"/></g>
<path d="M34 430v-3.6l-3.6 3.600z" fill="#cfcfcf"/>
<g transform="translate(51 420)" fill="none" stroke="#d4d4d4" stroke-width="1.3" stroke-linejoin="round" stroke-linecap="round"><circle cx="-3.300" cy="-2.200" r="4.700" stroke-width="1.600"/><path d="M0.500 1.600L7.600 6.600" stroke-width="2.400"/></g>
<rect x="24.500" y="457.500" width="35" height="34" fill="#ffffff" stroke="#e8e8e8"/>
<rect x="33.500" y="467" width="16.500" height="16" fill="#535353" stroke="#999" stroke-width="0.600"/>
<path d="M25 491L59 458" stroke="#e0141e" stroke-width="3"/>
<rect x="7" y="440" width="34.500" height="34" fill="#2ba6e0" stroke="#e4e4e4" stroke-width="1.400"/>
<path d="M53 443.500H56.500Q58.500 443.500 58.500 445.500V449" fill="none" stroke="#d4d4d4" stroke-width="1.600"/><path d="M53.500 440.500V446.500L50 443.500Z" fill="#d4d4d4"/><path d="M55.500 448.500H61.500L58.500 452Z" fill="#d4d4d4"/>
<rect x="10.500" y="484.500" width="7" height="7" fill="#111" stroke="#f0f0f0" stroke-width="1"/><rect x="7.500" y="481.500" width="7" height="7" fill="#fff" stroke="#111" stroke-width="1.200"/>
<rect x="6.500" y="500.500" width="18" height="18" rx="1.500" fill="#2e2e2e"/>
<rect x="8.500" y="502.500" width="14" height="14" fill="#2ba6e0" stroke="#111" stroke-width="1"/>
<rect x="28.500" y="502.500" width="14" height="14" fill="url(#gr)" stroke="#111" stroke-width="1"/>
<rect x="48.500" y="502.500" width="14" height="14" fill="#fff" stroke="#111" stroke-width="1"/><path d="M49.500 515.500L61.500 503.500" stroke="#e0141e" stroke-width="2.600"/>
<rect x="7.500" y="525.500" width="17" height="16.500" rx="1.500" fill="#333"/>
<rect x="27.500" y="525.500" width="17" height="16.500" rx="1.500" fill="none" stroke="#5e5e5e"/><rect x="47.500" y="525.500" width="16.500" height="16.500" rx="1.500" fill="none" stroke="#5e5e5e"/>
<circle cx="13.500" cy="531.500" r="4" fill="#9a9a9a" stroke="#d0d0d0" stroke-width="1"/><rect x="14.500" y="532.500" width="6.500" height="6.500" fill="#d8d8d8"/>
<rect x="34.500" y="532.500" width="6.500" height="6.500" fill="#8a8a8a"/><circle cx="33.500" cy="531.500" r="4" fill="#7a7a7a" stroke="#b0b0b0" stroke-width="1"/>
<circle cx="55" cy="533" r="4" fill="none" stroke="#6a6a6a" stroke-width="1"/><path d="M55 533h4v4" fill="none" stroke="#6a6a6a"/>
<rect x="25.500" y="557.500" width="12" height="10" fill="#6a6a6a" stroke="#c8c8c8"/><rect x="33.500" y="551.500" width="13" height="10.500" fill="#6a6a6a" stroke="#c8c8c8"/><path d="M33 552.500h14" stroke="#d8d8d8" stroke-width="2"/>
<circle cx="31" cy="591.500" r="1.500" fill="#c8c8c8"/><circle cx="36" cy="591.500" r="1.500" fill="#c8c8c8"/><circle cx="41" cy="591.500" r="1.500" fill="#c8c8c8"/>
</svg>
</body></html>
